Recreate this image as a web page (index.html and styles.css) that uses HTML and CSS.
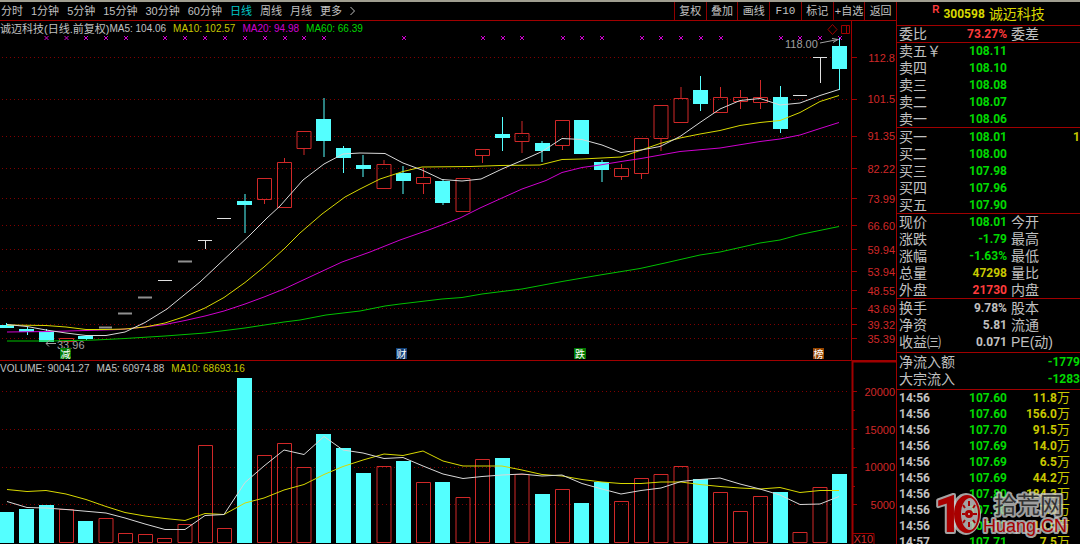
FILE: index.html
```html
<!DOCTYPE html>
<html lang="zh-CN">
<head>
<meta charset="utf-8">
<title>诚迈科技 300598</title>
<link rel="stylesheet" href="styles.css">
</head>
<body>
<div class="app">
  <main class="main">
    <div class="toolbar">
      <nav class="periods">
        <button>分时</button><button>1分钟</button><button>5分钟</button><button>15分钟</button><button>30分钟</button><button>60分钟</button><button class="active">日线</button><button>周线</button><button>月线</button><button>更多</button>
        <svg class="chevron" viewBox="0 0 5 10"><path d="M0.5 1l4 4-4 4"/></svg>
      </nav>
      <div class="tools">
        <button>复权</button><button>叠加</button><button>画线</button><button class="mono">F10</button><button>标记</button><button>+自选</button><button>返回</button>
      </div>
    </div>

    <section class="panel price">
      <div class="legend">
        <span class="name">诚迈科技(日线.前复权)</span><span>MA5: 104.06</span><span class="yellow">MA10: 102.57</span><span class="magenta">MA20: 94.98</span><span class="green">MA60: 66.39</span>
      </div>
      <svg class="chart" viewBox="0 21 896 339">
        <defs><path id="x" d="M-2-2l4 4M2-2l-4 4"/></defs>
        <path class="grid" d="M2 57.5H850M2 99.5H850M2 136.5H850M2 168.5H850M2 198.5H850M2 225.5H850M2 249.5H850M2 271.5H850M2 290.5H850M2 308.5H850M2 324.5H850M2 338.5H850"/>
        <path class="frame" d="M851.5 21V360M852 57.5h5M852 99.5h5M852 136.5h5M852 168.5h5M852 198.5h5M852 225.5h5M852 249.5h5M852 271.5h5M852 290.5h5M852 308.5h5M852 324.5h5M852 338.5h5"/>
        <g class="crosses">
          <use href="#x" x="46.500" y="38"/><use href="#x" x="66.500" y="38"/><use href="#x" x="86" y="38"/><use href="#x" x="106" y="38"/><use href="#x" x="126" y="38"/><use href="#x" x="165" y="38"/><use href="#x" x="185" y="38"/><use href="#x" x="205" y="38"/><use href="#x" x="225" y="38"/><use href="#x" x="245" y="38"/><use href="#x" x="265" y="38"/><use href="#x" x="285" y="38"/><use href="#x" x="304" y="38"/><use href="#x" x="324" y="38"/><use href="#x" x="404" y="38"/><use href="#x" x="483" y="38"/><use href="#x" x="503" y="38"/><use href="#x" x="522" y="38"/><use href="#x" x="563" y="38"/><use href="#x" x="582" y="38"/><use href="#x" x="602" y="38"/><use href="#x" x="642" y="38"/><use href="#x" x="661" y="38"/><use href="#x" x="681" y="38"/><use href="#x" x="701" y="38"/><use href="#x" x="721" y="38"/><use href="#x" x="781" y="38"/><use href="#x" x="800" y="38"/><use href="#x" x="820" y="38"/><use href="#x" x="840" y="38"/>
        </g>
        <path class="down-wick" d="M6.500 323v4M27.500 327v8M46.500 329v5M86.500 335v5"/>
        <path class="down-wick dim" d="M245 194v39M324 98v59M363 155v22M403 166v28M443 179v26M542 141v21M602 160v22"/>
        <path class="down-wick" d="M343.500 146v27M502.500 117v34M700.500 76v35M780.500 86v47M839.500 38v52"/>
        <path class="down" d="M-1 325h15v2.500H-1zM19 329h15v3H19zM39 331h15v11H39zM78 336h15v3H78zM237 201h15v4H237zM316 119h15v22H316zM336 148h15v10H336zM356 165h15v4H356zM396 173h15v8H396zM435 181h15v22H435zM495 134h15v4H495zM535 143h15v8H535zM574 120h15v34H574zM594 162h15v8H594zM693 90h15v14H693zM773 97h15v32H773zM832 46h15v23H832z"/>
        <path class="up" d="M59.500 338.500h14v3h-14zM257.500 178.500h14v21h-14zM264.500 200v4M277.500 162.500h14v45h-14zM284.500 158v4M297 131.500h14v17h-14zM304 149v6M377 164.500h14v24h-14zM384 160v4M416.500 177.500h14v6h-14zM423.500 168v9M423.500 184v10M456 178.500h14v33h-14zM475.500 149.500h14v6h-14zM482.500 156v7M515 133.500h14v8h-14zM522 121v12M522 142v11M555.500 120.500h14v25h-14zM562.500 146v4M614.500 168.500h14v8h-14zM621.500 164v4M621.500 177v3M634.500 138.500h14v35h-14zM641.500 174v5M654 105.500h14v33h-14zM661 139v12M674 98.500h14v24h-14zM681 87v11M713.500 97.500h14v15h-14zM720.500 87v10M733.500 97.500h14v4h-14zM740.500 90v7M740.500 102v7M753.500 97.500h14v5h-14zM760.500 80v17M760.500 103v6"/>
        <path class="flat dim" d="M99 327.500h13M118 313.500h14M138 297.500h14M178 261.500h14"/>
        <path class="flat" d="M158 280.500h14M198 240.500h14M205.500 241v8M217 218.500h14M793 95.500h14M813 57.500h14M820.500 58v25"/>
        <polyline class="line green-line" points="7,341 50,341 95,340 125,338.500 165,336 205,333 245,328 284,322 300,320 326,315 360,311 385,306 400,304 442,299 462,297.500 482,294 522,289 562,281.500 600,275 640,268.500 665,263 700,255 720,252 760,243 780,240 800,234.500 839,226.500"/>
        <polyline class="line magenta-line" points="7,332 50,331.500 86,330.500 120,329.500 145,327 165,324.500 185,320.500 205,316 224,311 245,304 264,297 284,289 300,281.500 342,262 370,252 400,240 430,229.500 460,218 480,208 502,198 522,189 546,180.500 562,172.500 582,167.500 600,165 621,161.500 641,158.500 680,151.500 720,148 760,141.500 780,139 800,135 820,128.500 839,122.500"/>
        <polyline class="line yellow-line" points="7,325 46,325.500 66,327 86,329.500 106,329.500 125,329 145,327 165,323 185,316.500 205,308 224,297.500 245,282.500 264,267 284,249 300,233 322,214 345,197 360,189 380,179 403,171.500 422,167 470,166.500 500,165.500 540,165 562,159.500 582,159 621,157 640,150.500 660,143.500 680,138 700,134 720,130.500 740,125.500 760,122.500 780,120.500 800,112.500 820,101.500 839,95.500"/>
        <polyline class="line white-line" points="7,324.500 27,326.500 46,330 66,333 86,335.500 106,335.500 125,332 145,322.500 167,309 200,282 233,251 250,235 267,218 280,206 303,180 324,164 343,154 360,153 385,153.500 403,163 422,170 442,179.500 462,181 481,179 502,169 522,160.500 542,151.500 562,138.500 582,139.500 602,145 621,152.500 641,150 660,146.500 680,136.500 700,122.500 720,109 740,100.500 760,98.500 780,105 800,103 820,95.500 839,89.500"/>
        <path class="arrow" d="M820 43l18-3.500M832 38.500l6 1-5 3M56 343.500H46M50 340l-4 3.500 3 3"/>
        <text class="note" x="785" y="48">118.00</text>
        <text class="note" x="57" y="349">33.96</text>
        <path class="frame" d="M832.500 24.500l4.500 5-4.500 5-4.500-5zM841.500 25.500h8v8h-8zM846.500 25v9"/>
        <g class="tags">
          <rect x="60" y="348" width="11" height="11" fill="#007800"/><text x="65.500" y="357.500">减</text>
          <rect x="396" y="348" width="11" height="11" fill="#104078"/><text x="401.500" y="357.500">财</text>
          <rect x="574" y="348" width="12" height="11" fill="#007800"/><text x="580" y="357.500">跌</text>
          <rect x="813" y="348" width="11" height="11" fill="#964600"/><text x="818.500" y="357.500">榜</text>
        </g>
        <g class="scale">
          <text x="895" y="62">112.8</text><text x="895" y="103">101.5</text><text x="895" y="140">91.35</text><text x="895" y="173">82.22</text><text x="895" y="203">73.99</text><text x="895" y="230">66.60</text><text x="895" y="254">59.94</text><text x="895" y="276">53.94</text><text x="895" y="295">48.55</text><text x="895" y="313">43.69</text><text x="895" y="329">39.32</text><text x="895" y="343">35.39</text>
        </g>
      </svg>
    </section>

    <section class="panel volume">
      <div class="legend">
        <span>VOLUME: 90041.27</span><span>MA5: 60974.88</span><span class="yellow">MA10: 68693.16</span>
      </div>
      <svg class="chart" viewBox="0 361 896 183">
        <path class="grid" d="M2 391.500H850M2 429.500H850M2 467.500H850M2 504.500H850"/>
        <path class="frame strong" d="M896 361.500H852.500V544"/>
        <path class="frame" d="M853 391.500h4M853 410.500h2M853 429.500h4M853 448.500h2M853 467.500h4M853 486.500h2M853 504.500h4M853 533.500h21V544"/>
        <path class="down" d="M-1 512h15v31H-1zM19 509h15v34H19zM39 505h15v38H39zM78 521h15v22H78zM237 378h15v165H237zM316 434h15v109H316zM336 448h15v95H336zM356 473h15v70H356zM396 461h15v82H396zM435 482h15v61H435zM495 458h15v85H495zM535 494h15v49H535zM574 503h15v40H574zM594 482h15v61H594zM693 479h15v64H693zM773 492h15v51H773zM832 474h15v69H832z"/>
        <path class="up" d="M59.500 509.500h14v33h-14zM99 518.500h14v24h-14zM118.500 533.500h14v9h-14zM138.500 534.500h14v8h-14zM157.500 538.500h14v4h-14zM178 524.500h14v18h-14zM198.500 445.500h14v97h-14zM217.500 528.500h14v14h-14zM257.500 455.500h14v87h-14zM277.500 443.500h14v99h-14zM297 467.500h14v75h-14zM377 466.500h14v76h-14zM416.500 482.500h14v60h-14zM456 497.500h14v45h-14zM475.500 459.500h14v83h-14zM515 474.500h14v68h-14zM555.500 489.500h14v53h-14zM614.500 501.500h14v41h-14zM634.500 478.500h14v64h-14zM654 474.500h14v68h-14zM674 466.500h14v76h-14zM713.500 492.500h14v50h-14zM733.500 511.500h14v31h-14zM753.500 496.500h14v46h-14zM793 532.500h14v10h-14zM813 487.500h14v55h-14z"/>
        <polyline class="line yellow-line" points="7,489.500 27,491.500 46,490.500 66,494 86,499.500 106,506.500 125,512.500 145,516 165,518.500 185,520.500 205,513.500 224,514.500 245,503 264,498 284,490 304,484.500 324,474.500 343,466.500 363,460 384,454 403,455.500 423,451 443,461 463,466 502,466 522,470 542,474.500 562,476 582,479.500 602,482 621,483.500 641,483.500 661,482 681,482 700,484.500 720,486.500 740,488 760,489 780,487.500 800,492.500 820,490.500 839,490.500"/>
        <polyline class="line white-line" points="7,501.500 27,507.500 46,508 66,509.500 106,513 125,518 145,524 165,529.500 185,529.500 205,515.500 224,514.500 245,482.500 264,466 284,450 304,454.500 324,436.500 343,450 363,453 384,458.500 403,457.500 423,466 443,474 463,478.500 482,476.500 502,475 522,474 542,476 562,475 582,483.500 602,489 621,494 641,490.500 661,488 681,481.500 700,479.500 720,478 740,484 760,489 780,495 800,504.500 820,504 839,496.500"/>
        <g class="scale">
          <text x="895" y="396">20000</text><text x="895" y="434">15000</text><text x="895" y="471">10000</text><text x="895" y="509">5000</text><text x="873" y="543">X10</text>
        </g>
      </svg>
    </section>
  </main>

  <aside class="side">
    <h1 class="title"><sup>R</sup><b>300598</b><span>诚迈科技</span></h1>
    <div class="group ratio">
      <div class="row"><span>委比</span><b class="red">73.27%</b><span>委差</span></div>
    </div>
    <div class="group">
      <div class="row"><span>卖五￥</span><b class="green">108.11</b></div>
      <div class="row"><span>卖四</span><b class="green">108.10</b></div>
      <div class="row"><span>卖三</span><b class="green">108.08</b></div>
      <div class="row"><span>卖二</span><b class="green">108.07</b></div>
      <div class="row"><span>卖一</span><b class="green">108.06</b></div>
    </div>
    <div class="group bids">
      <div class="row"><span>买一</span><b class="green">108.01</b><span></span><b class="yellow">1</b></div>
      <div class="row"><span>买二</span><b class="green">108.00</b></div>
      <div class="row"><span>买三</span><b class="green">107.98</b></div>
      <div class="row"><span>买四</span><b class="green">107.96</b></div>
      <div class="row"><span>买五</span><b class="green">107.90</b></div>
    </div>
    <div class="group">
      <div class="row"><span>现价</span><b class="green">108.01</b><span>今开</span></div>
      <div class="row"><span>涨跌</span><b class="green">-1.79</b><span>最高</span></div>
      <div class="row"><span>涨幅</span><b class="green">-1.63%</b><span>最低</span></div>
      <div class="row"><span>总量</span><b class="yellow">47298</b><span>量比</span></div>
      <div class="row"><span>外盘</span><b class="red">21730</b><span>内盘</span></div>
    </div>
    <div class="group loose">
      <div class="row"><span>换手</span><b>9.78%</b><span>股本</span></div>
      <div class="row"><span>净资</span><b>5.81</b><span>流通</span></div>
      <div class="row"><span>收益㈢</span><b>0.071</b><span>PE(动)</span></div>
    </div>
    <div class="group loose">
      <div class="row flow"><span>净流入额</span><b class="green">-1779</b></div>
      <div class="row flow"><span>大宗流入</span><b class="green">-1283</b></div>
    </div>
    <table class="ticks">
      <tr><td>14:56</td><td>107.60</td><td>11.8<i>万</i></td></tr>
      <tr><td>14:56</td><td>107.60</td><td>156.0<i>万</i></td></tr>
      <tr><td>14:56</td><td>107.70</td><td>91.5<i>万</i></td></tr>
      <tr><td>14:56</td><td>107.69</td><td>14.0<i>万</i></td></tr>
      <tr><td>14:56</td><td>107.69</td><td>6.5<i>万</i></td></tr>
      <tr><td>14:56</td><td>107.69</td><td>44.2<i>万</i></td></tr>
      <tr><td>14:56</td><td>107.80</td><td>184.3<i>万</i></td></tr>
      <tr><td>14:56</td><td>107.70</td><td>7.5<i>万</i></td></tr>
      <tr><td>14:56</td><td>107.71</td><td>14.0<i>万</i></td></tr>
      <tr><td>14:57</td><td>107.71</td><td>7.5<i>万</i></td></tr>
    </table>
    <svg class="watermark" viewBox="936 490 136 46">
      <ellipse class="halo" cx="966" cy="514" rx="13" ry="19"/>
      <text class="one" x="934" y="532">1</text>
      <path class="ring" fill-rule="evenodd" d="M967 495c7 0 13 8 13 19s-6 19-13 19-13-8-13-19 6-19 13-19zM970 498c-5 0-9 7-9 16s4 16 9 16c4 0 8-7 8-16s-4-16-8-16z"/>
      <path class="spokes" d="M969 501v5M969 522v5M962 514h3M973 514h4M963 505l2 3M975 505l-2 3M963 523l2-3M975 523l-2-3"/>
      <circle class="ring" cx="969" cy="514" r="4"/>
      <circle cx="969" cy="514" r="1" fill="#ccc"/>
      <text class="cn" x="994" y="513">拾荒网</text>
      <text class="en" x="983" y="532">Huang.CN</text>
    </svg>
  </aside>
</div>
</body>
</html>
```

FILE: styles.css
```css
* { box-sizing: border-box; }

body {
  margin: 0;
  background: #000;
  color: #c0c0c0;
  font: 11px/14px "Liberation Sans", "Noto Sans CJK SC", sans-serif;
}

.app {
  display: flex;
  height: 100vh;
  overflow: hidden;
  border-top: 2px solid #a09e90;
}

.main { flex: 1; min-width: 0; }

.toolbar {
  display: flex;
  justify-content: space-between;
  height: 19px;
  border-bottom: 1px solid #a00000;
}

button {
  padding: 0;
  border: 0;
  background: none;
  color: inherit;
  font: inherit;
  white-space: nowrap;
}

.periods { display: flex; align-items: center; gap: 8px; padding-left: 1px; }
.periods .active { color: #00c8c8; }
.chevron { width: 5px; height: 10px; fill: none; stroke: #c0c0c0; }

.tools { display: grid; grid-template-columns: repeat(7, 1fr); width: 222px; }
.tools button { border-left: 1px solid #900000; }
.tools .mono { font-family: "Liberation Mono", monospace; }

.panel { position: relative; }
.price { border-bottom: 1px solid #a00000; }
.chart { display: block; width: 100%; height: auto; }

.legend {
  position: absolute;
  top: 1px;
  left: 0;
  display: flex;
  gap: 7px;
  font-size: 10px;
  white-space: nowrap;
}
.legend .name { margin-right: -7px; font-size: 11px; }

.yellow { color: #c8c800; }
.magenta { color: #d000d0; }
.green { color: #00d800; }
.red { color: #ff3c3c; }

.grid { stroke: #800000; stroke-dasharray: 1 3; fill: none; shape-rendering: crispEdges; }
.frame { stroke: #a00000; fill: none; }
.frame.strong { stroke-width: 2; }
.crosses { stroke: #d000d0; }
.down { fill: #54ffff; shape-rendering: crispEdges; }
.down-wick { stroke: #54ffff; }
.down-wick.dim { stroke: #2a8080; stroke-width: 2; }
.up { fill: none; stroke: #d02828; }
.flat { fill: none; stroke: #e0e0e0; }
.flat.dim { stroke: #909090; stroke-width: 2; }
.line { fill: none; stroke-width: 1; }
.white-line { stroke: #d8d8d8; }
.yellow-line { stroke: #d8d800; }
.magenta-line { stroke: #d000d0; }
.green-line { stroke: #00c000; }
.arrow { fill: none; stroke: #a0a0a0; }
.note { fill: #a0a0a0; font-size: 11px; }
.tags text { fill: #fff; font-size: 10px; text-anchor: middle; }
.scale { fill: #d02828; font-size: 11px; text-anchor: end; }

.side {
  position: relative;
  flex: 0 0 184px;
  border-left: 1px solid #a00000;
  font-size: 14px;
  line-height: 16px;
}
.side b, .ticks { font-family: Roboto, "Noto Sans CJK SC", sans-serif; font-size: 12px; font-weight: 700; }

.title {
  display: flex;
  align-items: center;
  justify-content: center;
  gap: 4px;
  height: 24px;
  margin: 0;
  border-bottom: 1px solid #a00000;
  color: #d8d800;
  font-size: 14px;
  font-weight: 400;
}
.title sup { align-self: flex-start; color: #ff3c3c; font-size: 10px; font-weight: 700; line-height: 16px; }

.group { display: grid; gap: 1px; padding-left: 2px; border-bottom: 1px solid #a00000; }
.bids { padding-top: 1px; }
.loose { padding-top: 1px; padding-bottom: 2px; }

.row { display: grid; grid-template-columns: 48px 60px 1fr auto; height: 16px; white-space: nowrap; }
.row b { text-align: right; }
.row span:nth-child(3) { padding-left: 4px; }
.row.flow { grid-template-columns: 1fr auto; }

.ticks { width: 173px; border-spacing: 0; table-layout: fixed; }
.ticks td { height: 16px; padding: 0; line-height: 16px; }
.ticks td:nth-child(1) { width: 50px; padding-left: 2px; }
.ticks td:nth-child(2) { width: 60px; text-align: right; color: #00d800; }
.ticks td:nth-child(3) { text-align: right; color: #c8c800; }
.ticks i { font-size: 13px; font-style: normal; font-weight: 400; line-height: 12px; }

.watermark { position: absolute; right: 8px; bottom: 8px; width: 136px; height: 46px; overflow: visible; }
.watermark text { stroke: rgba(204, 204, 204, 0.8); stroke-width: 4px; stroke-linejoin: round; paint-order: stroke; }
.watermark .one { fill: #a80000; font: 700 51px Roboto, sans-serif; }
.watermark .ring { fill: #a80000; }
.watermark .halo { fill: #ccc; stroke: #ccc; stroke-width: 4px; opacity: 0.8; }
.watermark .spokes { stroke: #a80000; stroke-width: 2px; }
.watermark .cn { fill: #333; font-size: 23px; }
.watermark .en { fill: #a80000; font-size: 18px; }
```
